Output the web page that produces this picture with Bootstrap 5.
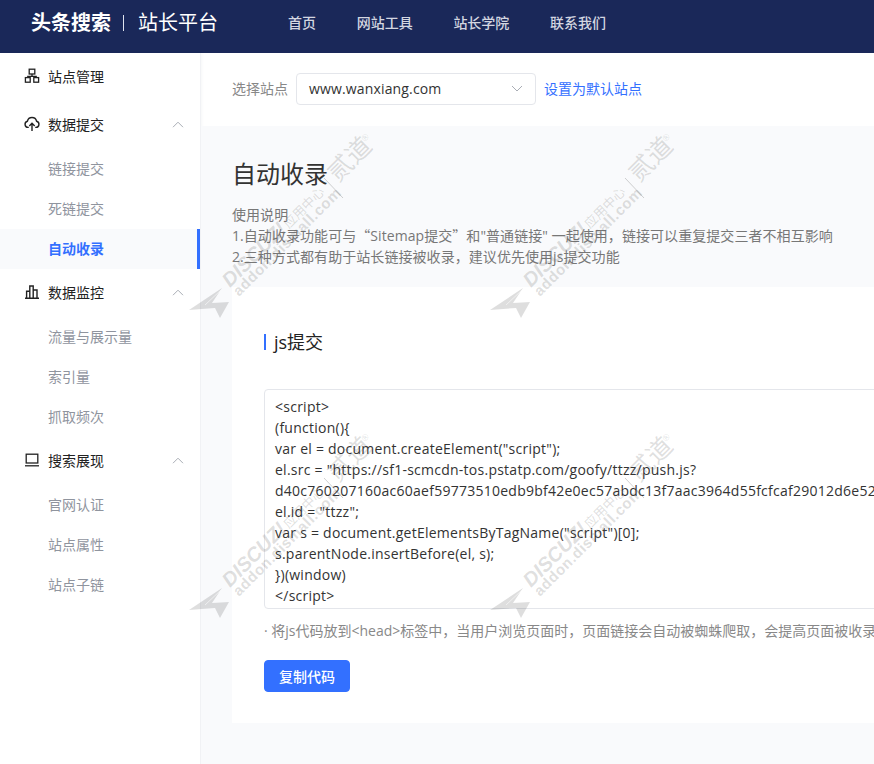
<!DOCTYPE html>
<html lang="zh-CN">
<head>
<meta charset="UTF-8">
<title>头条搜索 站长平台</title>
<link href="https://cdn.jsdelivr.net/npm/bootstrap@5.3.0/dist/css/bootstrap.min.css" rel="stylesheet">
<style>
html, body { height: 100%; }
body { font-family: "Open Sans", "Noto Sans CJK SC", sans-serif; font-size: 14px; background: #fff; overflow: hidden; position: relative; }
.topbar { height: 53px; background: #1a2859; color: #fff; padding-bottom: 7px; }
.brand-name { font-size: 20px; font-weight: 700; margin-left: 31px; line-height: 1; }
.brand-sep { width: 1px; height: 16px; background: #dfe3ee; margin: 0 14px 0 12px; }
.brand-sub { font-size: 20px; font-weight: 400; line-height: 1; }
.top-links { margin-left: 70px; gap: 40.7px; margin-bottom: 1px; }
.top-links a { color: #d3d6e0; font-size: 14px; font-weight: 500; text-decoration: none; }
.shell { height: 711px; }
.side { width: 201px; flex: none; border-right: 1px solid #f1f2f5; box-shadow: 1px 0 3px rgba(30,40,80,.04); }
.side-head { height: 48px; padding: 0 0 2px 24px; color: #222; gap: 8px; }
.side-head svg { flex: none; }
.side-head .caret { margin-left: auto; margin-right: 16px; }
.side-item { height: 40px; padding: 0 0 2px 48px; color: #8f949e; display: flex; align-items: center; text-decoration: none; }
.side-item.on { color: #3370ff; font-weight: 700; background: #f9fafc; border-right: 3px solid #3370ff; }
.main-col { min-width: 0; flex: 1; }
.pick-bar { height: 73px; padding: 20px 0 0 31px; }
.pick-label { color: #888; margin-right: 8px; line-height: 32px; }
.pick-box { width: 240px; height: 32px; border: 1px solid #e4e6eb; border-radius: 4px; padding: 0 12px 2px; color: #333; font-size: 14px; letter-spacing: .15px; }
.pick-link { color: #3370ff; text-decoration: none; font-size: 14px; margin-left: 8px; line-height: 32px; }
.gray-panel { background: #f9fafc; height: 638px; padding-left: 31px; }
.page-title { font-size: 24px; font-weight: 400; color: #333; margin: 0; padding-top: 31px; line-height: 34px; }
.intro { margin-top: 13px; color: #777; font-size: 14px; line-height: 21px; height: 62px; white-space: nowrap; letter-spacing: .06px; }
.wide-quote { font-family: "Noto Sans CJK SC", sans-serif; }
.code-card { background: #fff; width: 900px; height: 436px; margin-top: 21px; padding: 47px 0 0 32px; }
.card-title-bar { border-left: 2px solid #3370ff; padding-left: 8px; font-size: 18px; line-height: 16px; color: #222; height: 16px; }
.code-box { margin-top: 39px; height: 220px; border: 1px solid #e4e6eb; border-radius: 4px; padding: 6px 10px; color: #333; font-size: 14px; line-height: 21px; letter-spacing: .25px; white-space: nowrap; overflow: hidden; }
.code-note { color: #888; font-size: 14px; margin-top: 11px; line-height: 21px; white-space: nowrap; }
.copy-btn { background: #3370ff; border-color: #3370ff; color: #fff; width: 86px; height: 32px; padding: 0; font-size: 14px; font-weight: 500; border-radius: 4px; margin-top: 19px; display: block; }
.mark-stamp { position: absolute; width: 200px; height: 200px; pointer-events: none; }
.stamp-a { left: 185px; top: 130px; }
.stamp-b { left: 486px; top: 130px; }
.stamp-c { left: 185px; top: 430px; }
.stamp-d { left: 486px; top: 430px; }
.wm-plane { fill: rgba(0,0,0,.13); }
.wm-slit { stroke: rgba(255,255,255,.55); stroke-width: 1; }
.wm-text { fill: rgba(90,90,90,.2); font-family: "Liberation Sans", "Noto Sans CJK SC", sans-serif; }
.wm-bar { stroke: rgba(90,90,90,.28); stroke-width: 1; }
</style>
</head>
<body>
<nav class="topbar d-flex align-items-center">
    <span class="brand-name">头条搜索</span>
    <span class="brand-sep"></span>
    <span class="brand-sub">站长平台</span>
    <div class="top-links d-flex">
        <a href="#">首页</a>
        <a href="#">网站工具</a>
        <a href="#">站长学院</a>
        <a href="#">联系我们</a>
    </div>
</nav>
<div class="shell d-flex">
    <aside class="side">
        <div class="side-head d-flex align-items-center">
            <svg width="16" height="16" viewBox="0 0 16 16" fill="none" stroke="#222" stroke-width="1.3"><rect x="5.2" y="1.2" width="5.6" height="4.8"/><path d="M8 6v2.4M3.8 9.6V8.4h8.4v1.2"/><rect x="1.4" y="9.6" width="4.8" height="4.6"/><rect x="9.8" y="9.6" width="4.8" height="4.6"/></svg>
            <span>站点管理</span>
        </div>
        <div class="side-head d-flex align-items-center">
            <svg width="16" height="16" viewBox="0 0 16 16" fill="none" stroke="#222" stroke-width="1.4"><path d="M4.8 11.4H4a3.1 3.1 0 0 1-.6-6.1 4.7 4.7 0 0 1 9.2 0 3.1 3.1 0 0 1-.6 6.1h-.8"/><path d="M8 15V7.4M5.3 10 8 7.3l2.7 2.7"/></svg>
            <span>数据提交</span>
            <svg class="caret" width="12" height="7" viewBox="0 0 12 7" fill="none" stroke="#a9adb5"><path d="M1 6.2 6 1.2l5 5"/></svg>
        </div>
        <a class="side-item" href="#">链接提交</a>
        <a class="side-item" href="#">死链提交</a>
        <a class="side-item on" href="#">自动收录</a>
        <div class="side-head d-flex align-items-center">
            <svg width="16" height="16" viewBox="0 0 16 16" fill="none" stroke="#222" stroke-width="1.4"><path d="M1 14.3h14M2.6 14V7.2h3.2V14M5.8 14V2h3.4v12M9.2 14V6h3.8v8"/></svg>
            <span>数据监控</span>
            <svg class="caret" width="12" height="7" viewBox="0 0 12 7" fill="none" stroke="#a9adb5"><path d="M1 6.2 6 1.2l5 5"/></svg>
        </div>
        <a class="side-item" href="#">流量与展示量</a>
        <a class="side-item" href="#">索引量</a>
        <a class="side-item" href="#">抓取频次</a>
        <div class="side-head d-flex align-items-center">
            <svg width="16" height="16" viewBox="0 0 16 16" fill="none" stroke="#222" stroke-width="1.3"><rect x="2.2" y="2.2" width="11.6" height="8.8"/><path d="M1 13.8h14"/></svg>
            <span>搜索展现</span>
            <svg class="caret" width="12" height="7" viewBox="0 0 12 7" fill="none" stroke="#a9adb5"><path d="M1 6.2 6 1.2l5 5"/></svg>
        </div>
        <a class="side-item" href="#">官网认证</a>
        <a class="side-item" href="#">站点属性</a>
        <a class="side-item" href="#">站点子链</a>
    </aside>
    <main class="main-col">
        <div class="pick-bar d-flex align-items-start">
            <span class="pick-label">选择站点</span>
            <div class="pick-box d-flex align-items-center justify-content-between">
                <span>www.wanxiang.com</span>
                <svg width="12" height="7" viewBox="0 0 12 7" fill="none" stroke="#a9adb5"><path d="M1 1l5 5 5-5"/></svg>
            </div>
            <a class="pick-link" href="#">设置为默认站点</a>
        </div>
        <div class="gray-panel">
            <h1 class="page-title">自动收录</h1>
            <div class="intro">
                使用说明<br>
                1.自动收录功能可与<span class="wide-quote">“</span>Sitemap提交<span class="wide-quote">”</span>和"普通链接" 一起使用，链接可以重复提交三者不相互影响<br>
                2.三种方式都有助于站长链接被收录，建议优先使用js提交功能
            </div>
            <section class="code-card">
                <div class="card-title-bar">js提交</div>
                <div class="code-box">
                    &lt;script&gt;<br>
                    (function(){<br>
                    var el = document.createElement("script");<br>
                    el.src = "https://sf1-scmcdn-tos.pstatp.com/goofy/ttzz/push.js?<br>
                    d40c760207160ac60aef59773510edb9bf42e0ec57abdc13f7aac3964d55fcfcaf29012d6e528c3a<br>
                    el.id = "ttzz";<br>
                    var s = document.getElementsByTagName("script")[0];<br>
                    s.parentNode.insertBefore(el, s);<br>
                    })(window)<br>
                    &lt;/script&gt;
                </div>
                <div class="code-note">· 将js代码放到&lt;head&gt;标签中，当用户浏览页面时，页面链接会自动被蜘蛛爬取，会提高页面被收录的速度</div>
                <button type="button" class="btn copy-btn">复制代码</button>
            </section>
        </div>
    </main>
</div>

<svg class="mark-stamp stamp-a"></svg>
<svg class="mark-stamp stamp-b"></svg>
<svg class="mark-stamp stamp-c"></svg>
<svg class="mark-stamp stamp-d"></svg>
<script src="https://cdn.jsdelivr.net/npm/bootstrap@5.3.0/dist/js/bootstrap.bundle.min.js"></script>
<script>
    // same watermark on all four stamps
    const stamp = `
        <path class="wm-plane" d="M4 180 37 158 27 173 44 172 35 188 30 178z"/>
        <line class="wm-slit" x1="20" y1="175" x2="36" y2="160"/>
        <g transform="translate(45 158) rotate(-45)">
            <text class="wm-text" font-size="20" font-weight="700" font-style="italic">DISCUZ!</text>
            <text class="wm-text" x="83" font-size="13">应用中心</text>
        </g>
        <g transform="translate(54 167) rotate(-45)">
            <text class="wm-text" font-size="15" font-weight="700" letter-spacing=".6">addon.dismall.com</text>
        </g>
        <line class="wm-bar" x1="139" y1="48" x2="158" y2="68"/>
        <g transform="translate(153 53) rotate(-45)">
            <text class="wm-text" font-size="25">贰道</text>
        </g>
        <g transform="translate(180 12) rotate(-45)">
            <text class="wm-text" font-size="9">®</text>
        </g>`;
    document.querySelectorAll('.mark-stamp').forEach(el => { el.innerHTML = stamp; });
</script>
</body>
</html>
